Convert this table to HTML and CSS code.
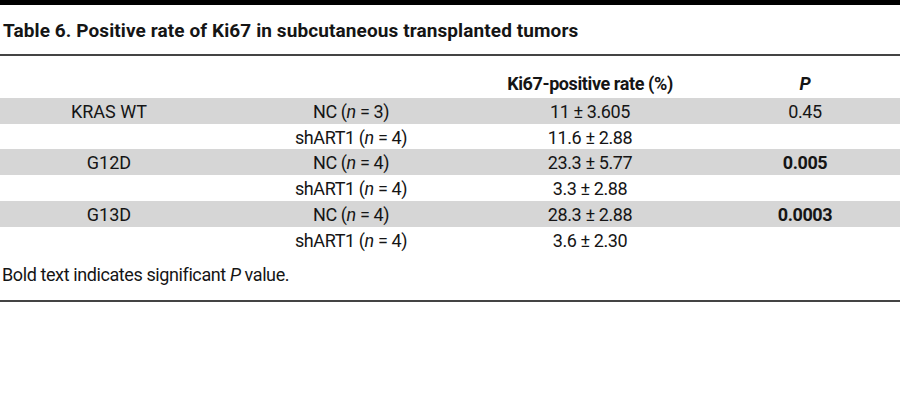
FILE: index.html
```html
<!DOCTYPE html>
<html lang="en">
<head>
<meta charset="utf-8">
<title>Table 6</title>
<link rel="stylesheet" href="styles.css">
</head>
<body>
<div class="topbar"></div>
<h1 class="title">Table 6. Positive rate of Ki67 in subcutaneous transplanted tumors</h1>
<div class="rule"></div>
<table class="data">
  <colgroup>
    <col class="c1"><col class="c2"><col class="c3"><col class="c4">
  </colgroup>
  <thead>
    <tr class="head">
      <th></th><th></th><th>Ki67-positive rate (%)</th><th class="pcol"><i>P</i></th>
    </tr>
  </thead>
  <tbody>
    <tr class="shade"><td class="grp">KRAS WT</td><td>NC (<i>n</i> = 3)</td><td>11 ± 3.605</td><td class="pcol">0.45</td></tr>
    <tr><td class="grp"></td><td>shART1 (<i>n</i> = 4)</td><td>11.6 ± 2.88</td><td class="pcol"></td></tr>
    <tr class="shade"><td class="grp">G12D</td><td>NC (<i>n</i> = 4)</td><td>23.3 ± 5.77</td><td class="pcol"><b>0.005</b></td></tr>
    <tr><td class="grp"></td><td>shART1 (<i>n</i> = 4)</td><td>3.3 ± 2.88</td><td class="pcol"></td></tr>
    <tr class="shade"><td class="grp">G13D</td><td>NC (<i>n</i> = 4)</td><td>28.3 ± 2.88</td><td class="pcol"><b>0.0003</b></td></tr>
    <tr><td class="grp"></td><td>shART1 (<i>n</i> = 4)</td><td>3.6 ± 2.30</td><td class="pcol"></td></tr>
  </tbody>
</table>
<p class="note">Bold text indicates significant <i>P</i> value.</p>
<div class="rule bottom"></div>
</body>
</html>
```

FILE: styles.css
```css
html, body {
  margin: 0;
  padding: 0;
  background: #fff;
}
body {
  width: 900px;
  font-family: Roboto, "Liberation Sans", sans-serif;
  color: #151515;
}
.topbar {
  height: 5px;
  background: #000;
}
.title {
  margin: 15px 0 0 3px;
  font-size: 19px;
  line-height: 22px;
  font-weight: 700;
  letter-spacing: 0.1px;
}
.rule {
  margin-top: 12px;
  height: 2px;
  background: #444;
}
.data {
  width: 900px;
  table-layout: fixed;
  border-collapse: collapse;
  font-size: 18px;
  letter-spacing: -0.4px;
}
.c1 { width: 218px; }
.c2 { width: 266px; }
.c3 { width: 212px; }
.c4 { width: 204px; }
.data th, .data td {
  padding: 0;
  text-align: center;
  font-weight: 400;
}
.data th {
  height: 40px;
  vertical-align: bottom;
  font-weight: 700;
  line-height: 24px;
  padding-bottom: 2px;
}
.data td {
  height: 25.7px;
  line-height: 23.7px;
  padding-top: 2px;
  box-sizing: border-box;
}
.data .grp {
  letter-spacing: 0;
}
.data .pcol {
  padding-left: 14px;
}
.data b {
  font-weight: 700;
}
.shade td {
  background: #d6d6d6;
}
.note {
  margin: 13px 0 0 2px;
  font-size: 18px;
  line-height: 20px;
  letter-spacing: -0.4px;
}
.rule.bottom {
  margin-top: 15px;
}
```
